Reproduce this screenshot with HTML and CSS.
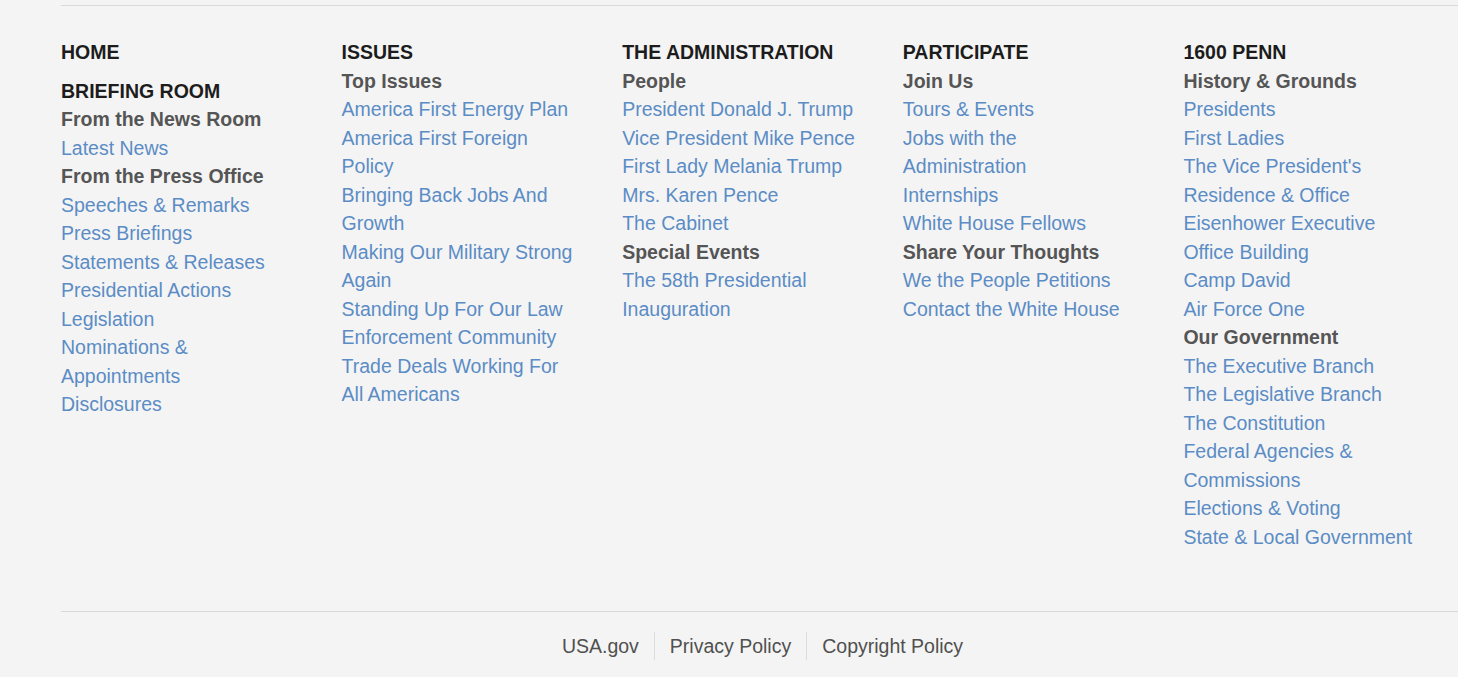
FILE: index.html
```html
<!DOCTYPE html>
<html lang="en">
<head>
<meta charset="utf-8">
<title>Footer</title>
<link rel="stylesheet" href="styles.css">
</head>
<body>
<footer class="site-footer">
  <nav class="footer-nav">
    <div class="col">
      <a class="head" href="#">HOME</a>
      <a class="head head-gap" href="#">BRIEFING ROOM</a>
      <span class="sub">From the News Room</span>
      <a class="link" href="#">Latest News</a>
      <span class="sub">From the Press Office</span>
      <a class="link" href="#">Speeches &amp; Remarks</a>
      <a class="link" href="#">Press Briefings</a>
      <a class="link" href="#">Statements &amp; Releases</a>
      <a class="link" href="#">Presidential Actions</a>
      <a class="link" href="#">Legislation</a>
      <a class="link" href="#">Nominations &amp; Appointments</a>
      <a class="link" href="#">Disclosures</a>
    </div>
    <div class="col">
      <a class="head" href="#">ISSUES</a>
      <span class="sub">Top Issues</span>
      <a class="link" href="#">America First Energy Plan</a>
      <a class="link" href="#">America First Foreign Policy</a>
      <a class="link" href="#">Bringing Back Jobs And Growth</a>
      <a class="link" href="#">Making Our Military Strong Again</a>
      <a class="link" href="#">Standing Up For Our Law Enforcement Community</a>
      <a class="link" href="#">Trade Deals Working For All Americans</a>
    </div>
    <div class="col">
      <a class="head" href="#">THE ADMINISTRATION</a>
      <span class="sub">People</span>
      <a class="link" href="#">President Donald J. Trump</a>
      <a class="link" href="#">Vice President Mike Pence</a>
      <a class="link" href="#">First Lady Melania Trump</a>
      <a class="link" href="#">Mrs. Karen Pence</a>
      <a class="link" href="#">The Cabinet</a>
      <span class="sub">Special Events</span>
      <a class="link" href="#">The 58th Presidential Inauguration</a>
    </div>
    <div class="col">
      <a class="head" href="#">PARTICIPATE</a>
      <span class="sub">Join Us</span>
      <a class="link" href="#">Tours &amp; Events</a>
      <a class="link" href="#">Jobs with the Administration</a>
      <a class="link" href="#">Internships</a>
      <a class="link" href="#">White House Fellows</a>
      <span class="sub">Share Your Thoughts</span>
      <a class="link" href="#">We the People Petitions</a>
      <a class="link" href="#">Contact the White House</a>
    </div>
    <div class="col">
      <a class="head" href="#">1600 PENN</a>
      <span class="sub">History &amp; Grounds</span>
      <a class="link" href="#">Presidents</a>
      <a class="link" href="#">First Ladies</a>
      <a class="link" href="#">The Vice President's Residence &amp; Office</a>
      <a class="link" href="#">Eisenhower Executive Office Building</a>
      <a class="link" href="#">Camp David</a>
      <a class="link" href="#">Air Force One</a>
      <span class="sub">Our Government</span>
      <a class="link" href="#">The Executive Branch</a>
      <a class="link" href="#">The Legislative Branch</a>
      <a class="link" href="#">The Constitution</a>
      <a class="link" href="#">Federal Agencies &amp; Commissions</a>
      <a class="link" href="#">Elections &amp; Voting</a>
      <a class="link" href="#">State &amp; Local Government</a>
    </div>
  </nav>
  <div class="legal">
    <a class="legal-link" href="#">USA.gov</a><a class="legal-link" href="#">Privacy Policy</a><a class="legal-link" href="#">Copyright Policy</a>
  </div>
</footer>
</body>
</html>
```

FILE: styles.css
```css
html, body {
  margin: 0;
  padding: 0;
  background: #f4f4f4;
  overflow: hidden;
}

body {
  font-family: "Liberation Sans", Arial, Helvetica, sans-serif;
  font-size: 19.5px;
  line-height: 28.5px;
}

a {
  text-decoration: none;
}

.site-footer {
  margin-left: 61px;
  width: 1403px;
  padding-top: 5px;
}

.footer-nav {
  display: grid;
  grid-template-columns: repeat(5, 1fr);
  border-top: 1px solid #d9d9d9;
  padding-top: 32px;
  padding-bottom: 60px;
}

.col {
  display: flex;
  flex-direction: column;
  align-items: flex-start;
  padding-right: 40px;
}

.head {
  color: #1c1c1c;
  font-weight: bold;
}

.head-gap {
  margin-top: 10px;
}

.sub {
  color: #555555;
  font-weight: bold;
}

.link {
  color: #5b8cc5;
}

.legal {
  border-top: 1px solid #d9d9d9;
  display: flex;
  justify-content: center;
  padding-top: 20px;
}

.legal-link {
  color: #505050;
  padding: 0 15px;
  line-height: 28px;
}

.legal-link + .legal-link {
  border-left: 1px solid #dcdcdc;
}
```
